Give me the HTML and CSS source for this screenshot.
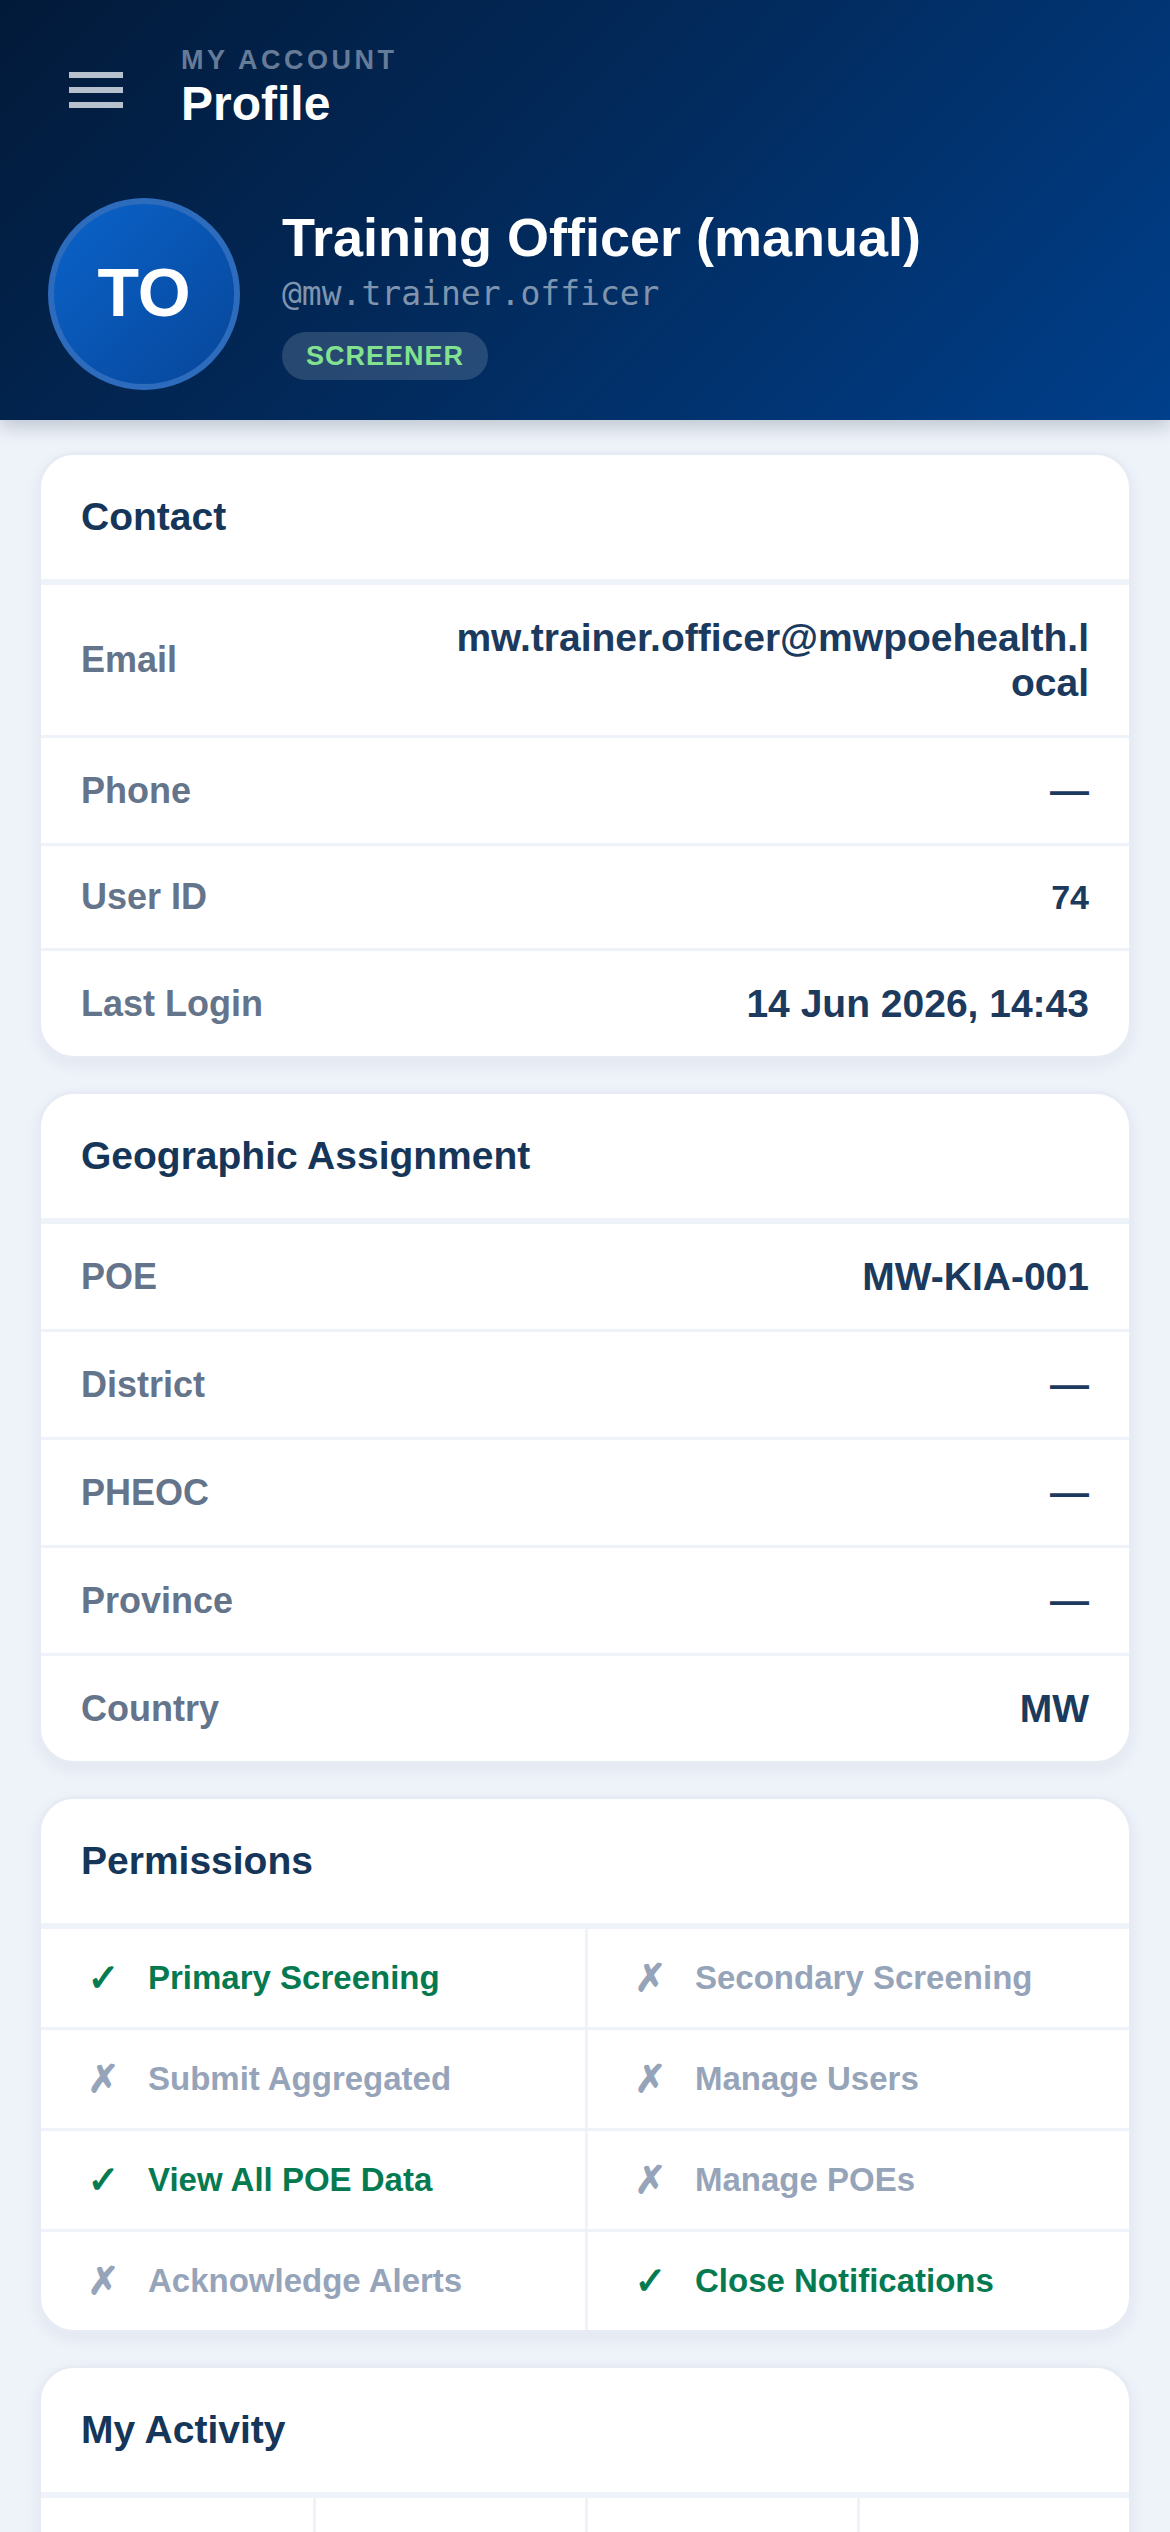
FILE: index.html
```html
<!DOCTYPE html>
<html lang="en">
<head>
<meta charset="utf-8">
<meta name="viewport" content="width=device-width, initial-scale=1">
<title>Profile</title>
<link rel="stylesheet" href="styles.css">
</head>
<body>
<header class="hero">
  <div class="topbar">
    <button class="menu-btn" aria-label="Menu">
      <span class="bars"><i></i><i></i><i></i></span>
    </button>
    <div class="titles">
      <div class="eyebrow">MY ACCOUNT</div>
      <h1 class="page-title">Profile</h1>
    </div>
  </div>
  <div class="identity">
    <div class="avatar">TO</div>
    <div class="who">
      <div class="name">Training Officer (manual)</div>
      <div class="handle">@mw.trainer.officer</div>
      <span class="role">SCREENER</span>
    </div>
  </div>
</header>

<main class="content">
  <section class="card">
    <div class="card-head">Contact</div>
    <div class="row"><span class="label">Email</span><span class="value">mw.trainer.officer@mwpoehealth.local</span></div>
    <div class="row"><span class="label">Phone</span><span class="value">—</span></div>
    <div class="row"><span class="label">User ID</span><span class="value value-sm">74</span></div>
    <div class="row"><span class="label">Last Login</span><span class="value">14 Jun 2026, 14:43</span></div>
  </section>

  <section class="card">
    <div class="card-head">Geographic Assignment</div>
    <div class="row"><span class="label">POE</span><span class="value">MW-KIA-001</span></div>
    <div class="row"><span class="label">District</span><span class="value">—</span></div>
    <div class="row"><span class="label">PHEOC</span><span class="value">—</span></div>
    <div class="row"><span class="label">Province</span><span class="value">—</span></div>
    <div class="row"><span class="label">Country</span><span class="value">MW</span></div>
  </section>

  <section class="card">
    <div class="card-head">Permissions</div>
    <div class="perm-grid">
      <div class="perm yes"><span class="mark">✓</span><span>Primary Screening</span></div>
      <div class="perm no"><span class="mark">✗</span><span>Secondary Screening</span></div>
      <div class="perm no"><span class="mark">✗</span><span>Submit Aggregated</span></div>
      <div class="perm no"><span class="mark">✗</span><span>Manage Users</span></div>
      <div class="perm yes"><span class="mark">✓</span><span>View All POE Data</span></div>
      <div class="perm no"><span class="mark">✗</span><span>Manage POEs</span></div>
      <div class="perm no"><span class="mark">✗</span><span>Acknowledge Alerts</span></div>
      <div class="perm yes"><span class="mark">✓</span><span>Close Notifications</span></div>
    </div>
  </section>

  <section class="card">
    <div class="card-head">My Activity</div>
    <div class="stat-grid">
      <div class="stat"><div class="stat-num">0</div><div class="stat-label">Today</div></div>
      <div class="stat"><div class="stat-num">0</div><div class="stat-label">Week</div></div>
      <div class="stat"><div class="stat-num">0</div><div class="stat-label">Month</div></div>
      <div class="stat"><div class="stat-num">0</div><div class="stat-label">Total</div></div>
    </div>
  </section>
</main>
</body>
</html>
```

FILE: styles.css
```css
html, body {
  margin: 0;
  padding: 0;
}

body {
  background: #eef2f9;
  font-family: "Liberation Sans", Arial, sans-serif;
  color: #1b3a5e;
}

/* ---------- Header ---------- */
.hero {
  position: relative;
  z-index: 1;
  padding: 42px 48px 30px;
  background: linear-gradient(135deg, #021a39 0%, #022b5e 50%, #003f8b 100%);
  box-shadow: 0 6px 18px rgba(10, 30, 60, 0.22);
}

.topbar {
  display: flex;
  align-items: flex-start;
  gap: 37px;
}

.menu-btn {
  width: 96px;
  height: 96px;
  padding: 0;
  border: 0;
  background: none;
  display: flex;
  align-items: center;
  justify-content: center;
  flex-shrink: 0;
}

.bars {
  display: flex;
  flex-direction: column;
  gap: 9px;
  width: 54px;
}

.bars i {
  display: block;
  height: 6px;
  background: #b7c1cd;
}

.titles {
  padding-top: 3px;
}

.eyebrow {
  font-size: 27px;
  line-height: 31px;
  font-weight: 700;
  letter-spacing: 3.5px;
  color: #667b97;
}

.page-title {
  margin: 0;
  font-size: 48px;
  line-height: 55px;
  font-weight: 700;
  color: #ffffff;
}

.identity {
  margin-top: 60px;
  display: flex;
  align-items: center;
  gap: 42px;
}

.avatar {
  width: 192px;
  height: 192px;
  box-sizing: border-box;
  border-radius: 50%;
  border: 6px solid #2d6bbd;
  background: linear-gradient(135deg, #0a63ca 0%, #07469a 100%);
  color: #ffffff;
  font-size: 68px;
  font-weight: 700;
  display: flex;
  align-items: center;
  justify-content: center;
  padding-bottom: 5px;
  flex-shrink: 0;
}

.who {
  display: flex;
  flex-direction: column;
  align-items: flex-start;
  margin-top: -3px;
}

.name {
  font-size: 54px;
  line-height: 62px;
  font-weight: 700;
  color: #ffffff;
}

.handle {
  margin-top: 6px;
  font-family: "DejaVu Sans Mono", "Liberation Mono", monospace;
  font-size: 33px;
  line-height: 40px;
  color: #7f94ae;
}

.role {
  margin-top: 18px;
  display: inline-block;
  height: 48px;
  line-height: 48px;
  padding: 0 24px;
  border-radius: 24px;
  background: rgba(255, 255, 255, 0.15);
  color: #82e28f;
  font-size: 27px;
  font-weight: 700;
  letter-spacing: 1px;
}

/* ---------- Cards ---------- */
.content {
  padding: 32px 38px 60px;
  display: flex;
  flex-direction: column;
  gap: 32px;
}

.card {
  background: #ffffff;
  border: 3px solid #e7ecf4;
  border-radius: 36px;
  overflow: hidden;
  box-shadow: 0 6px 16px rgba(30, 60, 110, 0.06);
}

.card-head {
  padding: 40px 40px;
  font-size: 39px;
  font-weight: 700;
  color: #163659;
  border-bottom: 3px solid #eef2f9;
}

.row {
  display: flex;
  justify-content: space-between;
  align-items: center;
  gap: 24px;
  padding: 30px 40px;
  border-top: 3px solid #eef2f9;
}

.label {
  font-size: 36px;
  font-weight: 700;
  color: #64748b;
  white-space: nowrap;
}

.value {
  max-width: 648px;
  font-size: 39px;
  line-height: 45px;
  font-weight: 700;
  color: #1b3a5e;
  text-align: right;
  word-break: break-all;
}

.value.value-sm {
  font-size: 34px;
  line-height: 39px;
}

/* ---------- Permissions ---------- */
.perm-grid {
  display: grid;
  grid-template-columns: 1fr 1fr;
}

.perm {
  display: flex;
  align-items: center;
  gap: 22px;
  padding: 30px 40px;
  border-top: 3px solid #eef2f9;
  font-size: 33px;
  line-height: 38px;
  font-weight: 700;
}

.perm:nth-child(even) {
  border-left: 3px solid #eef2f9;
}

.mark {
  width: 45px;
  text-align: center;
  font-family: "DejaVu Sans", sans-serif;
  font-weight: 700;
  font-size: 38px;
  line-height: 38px;
  -webkit-text-stroke: 1.2px currentColor;
  flex-shrink: 0;
}

.perm.yes {
  color: #057a51;
}

.perm.no {
  color: #96a4b9;
}

/* ---------- Activity ---------- */
.stat-grid {
  display: grid;
  grid-template-columns: repeat(4, 1fr);
}

.stat {
  padding: 40px 12px;
  border-top: 3px solid #eef2f9;
  text-align: center;
}

.stat + .stat {
  border-left: 3px solid #eef2f9;
}

.stat-num {
  font-size: 54px;
  font-weight: 700;
  color: #163659;
}

.stat-label {
  margin-top: 6px;
  font-size: 30px;
  font-weight: 700;
  color: #64748b;
}
```
